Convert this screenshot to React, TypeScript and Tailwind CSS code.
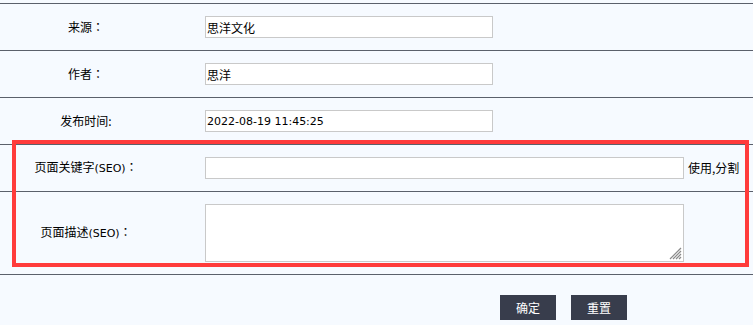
import React from "react";

const latin = "font-['DejaVu_Sans','Noto_Sans_CJK_SC',sans-serif] text-[11px]";
const colon = <span className="font-['Noto_Sans_CJK_TC',sans-serif]">：</span>;

function Row({ label, h, children }: { label: React.ReactNode; h: string; children: React.ReactNode }) {
  return (
    <div className={`flex items-center border-t border-[#5b606b] ${h}`}>
      <div className="w-[172px] text-center text-[12px] text-black">{label}</div>
      <div className="ml-[33px] flex items-center">{children}</div>
    </div>
  );
}

export default function App() {
  return (
    <div className="relative w-[753px] h-[325px] overflow-hidden bg-[#f6faff] font-['Noto_Sans_CJK_SC',sans-serif] text-[12px] text-black">
      <div className="h-[3px]" />
      <Row label={<span>来源{colon}</span>} h="h-[47px]">
        <input
          readOnly
          defaultValue="思洋文化"
          className="w-[288px] h-[22px] border border-[#c9c9c9] bg-white pl-[1px] text-[12px] text-black outline-none"
        />
      </Row>
      <Row label={<span>作者{colon}</span>} h="h-[47px]">
        <input
          readOnly
          defaultValue="思洋"
          className="w-[288px] h-[22px] border border-[#c9c9c9] bg-white pl-[1px] text-[12px] text-black outline-none"
        />
      </Row>
      <Row label="发布时间:" h="h-[47px]">
        <input
          readOnly
          defaultValue="2022-08-19 11:45:25"
          className={`w-[288px] h-[22px] border border-[#c9c9c9] bg-white pl-[1px] text-black outline-none ${latin}`}
        />
      </Row>
      <Row
        label={
          <span>
            页面关键字<span className={latin}>(SEO)</span>{colon}
          </span>
        }
        h="h-[47px]"
      >
        <input
          readOnly
          className="w-[479px] h-[22px] border border-[#c9c9c9] bg-white outline-none"
        />
        <span className="ml-[4px] text-[12px] text-black">使用,分割</span>
      </Row>
      <Row
        label={
          <span>
            页面描述<span className={latin}>(SEO)</span>{colon}
          </span>
        }
        h="h-[83px]"
      >
        <div className="relative">
          <textarea
            readOnly
            className="block w-[479px] h-[58px] resize-none border border-[#c9c9c9] bg-white outline-none"
          />
          <svg
            className="absolute right-[2px] bottom-[2px]"
            width="14"
            height="14"
            viewBox="0 0 14 14"
          >
            <g stroke="#8a8a8a" strokeWidth="1.2">
              <line x1="13" y1="2" x2="2" y2="13" />
              <line x1="13" y1="5" x2="5" y2="13" />
              <line x1="13" y1="8" x2="8" y2="13" />
              <line x1="13" y1="11" x2="11" y2="13" />
            </g>
          </svg>
        </div>
      </Row>
      <div className="border-t border-[#5b606b] pt-[20px] pl-[500px] flex gap-[15px]">
        <button className="w-[56px] h-[25px] bg-[#383d4c] text-white text-[12px]">确定</button>
        <button className="w-[56px] h-[25px] bg-[#383d4c] text-white text-[12px]">重置</button>
      </div>
      <div className="absolute left-[12px] top-[140px] w-[737px] h-[127px] border-[4px] border-[#ff3b3b] pointer-events-none" />
    </div>
  );
}
